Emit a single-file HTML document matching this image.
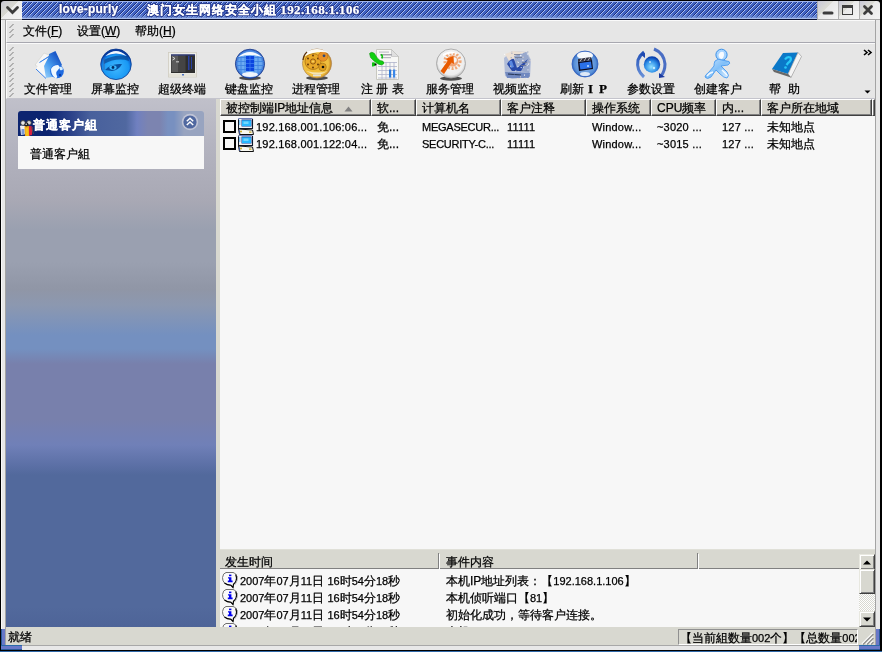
<!DOCTYPE html>
<html><head><meta charset="utf-8">
<style>
*{margin:0;padding:0;box-sizing:border-box}
html,body{width:882px;height:652px;overflow:hidden;background:#000}
body{position:relative;will-change:transform;-webkit-text-stroke:.25px currentColor;font-family:"Liberation Sans",sans-serif;font-size:12px;color:#000}
.a{position:absolute}
.ser{font-family:"Liberation Serif",serif;font-weight:bold}
#frame{left:1px;top:19px;width:879px;height:631px;background:#e8e8e8;border-left:1px solid #f8f8f8;border-top:1px solid #f8f8f8}
#title{left:22px;top:1px;width:795px;height:19px;border-bottom:1px solid #0a1030;background:#4062c0}
.tt{color:#fff;font-weight:bold;font-size:12px;top:1px;white-space:nowrap;text-shadow:1px 0 0 #2a3c90,-1px 0 0 #2a3c90,0 1px 0 #2a3c90,0 -1px 0 #2a3c90,1px 1px 0 #2a3c90,-1px -1px 0 #2a3c90,1px -1px 0 #2a3c90,-1px 1px 0 #2a3c90}
#mbtn{left:1px;top:1px;width:21px;height:19px;background:linear-gradient(135deg,#c8c8d4 0,#d8d8d0 45%,#ececec 46%,#f4f4f4);border-bottom:1px solid #a8a8a8;border-radius:3px 0 0 0}
.wb{top:1px;width:21px;height:19px;background:linear-gradient(135deg,#c8c8d8 0,#dcdcd4 40%,#e8e8e8 41%,#f4f4f4);border-bottom:1px solid #a8a8a8;border-left:1px solid #b0b0b0}
#client{left:5px;top:19px;width:871px;height:627px;border-left:1px solid #a4a4a4;border-right:1px solid #a4a4a4;border-top:1px solid #a8a8a8;border-bottom:1px solid #a8a8a8;background:#e6e6e6}
#menubar{left:6px;top:20px;width:869px;height:23px;background:#e6e6e6;border-top:1px solid #fafafa;border-left:1px solid #fafafa;border-bottom:1px solid #a8a8b0}
#toolbar{left:6px;top:43px;width:869px;height:56px;background:#e6e6e6;border-top:1px solid #fafafa;border-left:1px solid #fafafa;border-bottom:1px solid #c4c4cc}
.grip{left:3px;width:5px;background:repeating-linear-gradient(135deg,transparent 0 3px,#909090 3px 4px,transparent 4px 5px)}
.mi{top:2px;white-space:nowrap}
.tb{top:81px;width:67px;text-align:center;font-size:12px;white-space:nowrap}
#left{left:6px;top:99px;width:210px;height:528px;
 background:linear-gradient(#c0c0ca 0px,#b4b4c0 45px,#a8a8b4 103px,#9aa0b0 131px,#9aa0b0 163px,#9096a6 190px,#8c98b0 206px,#7490c0 236px,#7490c0 250px,#7880ac 265px,#7880ac 320px,#7080b8 346px,#5c70a6 366px,#52699c 376px,#52699c 508px,#4e6498 528px)}
#grp{left:12px;top:12px;width:186px;height:25px;border-radius:3px 3px 0 0;
 background:linear-gradient(90deg,#0c2470 0,#0c2470 30px,#2a4088 52px,#48609c 72px,#5068a0 108px,#7080c0 119px,#7c84b0 130px,#7c84b0 142px,#7890c0 150px,#7890c0 156px,#98a4c0 166px,#98a4c0 186px)}
#grpbody{left:12px;top:37px;width:186px;height:33px;background:#f7f7f7}
#split{left:216px;top:99px;width:4px;height:528px;background:#d8d8d0}
#list{left:220px;top:99px;width:655px;height:450px;background:#f7f7f7;overflow:hidden}
.hd{top:0;height:17px;background:#d6d4cc;border-top:1px solid #fff;border-left:1px solid #fff;border-right:1px solid #404040;border-bottom:1px solid #404040;box-shadow:inset -1px -1px 0 #808080}
.ht{position:absolute;left:5px;top:0px;white-space:nowrap}
.cb{width:13px;height:13px;border:2px solid #000;background:#f7f7f7}
.rt{white-space:nowrap;font-size:11px;letter-spacing:.2px}
.rc{white-space:nowrap;font-size:12px}
#ev{left:220px;top:549px;width:655px;height:78px;background:#f7f7f7;overflow:hidden}
#evh{left:0;top:0;width:655px;height:20px;background:#d8d8d0;border-top:1px solid #e0e0d8;border-bottom:1px solid #808080}
.et{white-space:nowrap;font-size:12px}
.dg{font-size:11px}
.sbb{width:16px;background:#d8d8d0;border-top:1px solid #e8e8e0;border-left:1px solid #e8e8e0;border-right:1px solid #404040;border-bottom:1px solid #404040;box-shadow:inset 1px 1px 0 #fff,inset -1px -1px 0 #808080}
#status{left:6px;top:627px;width:869px;height:18px;background:#d8d8d0}
</style></head><body>
<div id="frame" class="a"></div>
<div id="client" class="a"></div>
<div id="mbtn" class="a"><svg width="21" height="19" style="position:absolute;left:0;top:0"><path d="M6.5 6.5 L11.5 11.5 L16.5 6.5" stroke="#3c3c3c" stroke-width="2.8" fill="none" stroke-linecap="round"/></svg></div>
<div id="title" class="a">
 <svg class="a" style="left:0;top:0" width="795" height="18" shape-rendering="crispEdges">
  <defs>
   <pattern id="stripe" patternUnits="userSpaceOnUse" width="5" height="5" x="4" y="2">
    <rect x="4" y="0" width="1" height="1" fill="#1c2c78"/><rect x="3" y="1" width="1" height="1" fill="#1c2c78"/><rect x="2" y="2" width="1" height="1" fill="#1c2c78"/><rect x="1" y="3" width="1" height="1" fill="#1c2c78"/><rect x="0" y="4" width="1" height="1" fill="#1c2c78"/>
    <rect x="0" y="0" width="1" height="1" fill="#a8c0f4"/><rect x="4" y="1" width="1" height="1" fill="#a8c0f4"/><rect x="3" y="2" width="1" height="1" fill="#a8c0f4"/><rect x="2" y="3" width="1" height="1" fill="#a8c0f4"/><rect x="1" y="4" width="1" height="1" fill="#a8c0f4"/>
   </pattern>
   <linearGradient id="tgrad" x1="0" y1="0" x2="0" y2="1"><stop offset="0" stop-color="#3e60bf"/><stop offset=".72" stop-color="#4262c2"/><stop offset=".85" stop-color="#6080d0"/><stop offset="1" stop-color="#90a8e4"/></linearGradient>
   <linearGradient id="sfade" x1="0" y1="0" x2="0" y2="1"><stop offset="0" stop-color="#fff"/><stop offset=".75" stop-color="#fff"/><stop offset=".9" stop-color="#555"/><stop offset="1" stop-color="#222"/></linearGradient>
   <mask id="smask"><rect width="795" height="18" fill="url(#sfade)"/></mask>
  </defs>
  <rect width="795" height="18" fill="url(#tgrad)"/>
  <rect y="1" width="795" height="16" fill="url(#stripe)" mask="url(#smask)"/>
  <rect width="795" height="1" fill="#a0b4ec"/>
  <rect y="17" width="795" height="1" fill="#a8bcec"/>
 </svg>
 <div class="a tt" style="left:37px;letter-spacing:.2px">love-purly</div>
 <div class="a tt" style="left:125px"><span style="letter-spacing:1px">澳门女生网络安全小組</span> <span style="font-family:'Liberation Serif',serif;font-size:13px;letter-spacing:.35px">192.168.1.106</span></div>
</div>
<div class="a wb" style="left:817px"><svg width="21" height="19" style="position:absolute;left:0;top:0"><path d="M6 12 H14" stroke="#3c3c3c" stroke-width="3" stroke-linecap="round"/></svg></div>
<div class="a wb" style="left:838px"><svg width="21" height="19" style="position:absolute;left:0;top:0"><rect x="3.5" y="4.5" width="10" height="9" fill="none" stroke="#3c3c3c" stroke-width="1"/><rect x="3.5" y="4.5" width="10" height="2.5" fill="#3c3c3c"/></svg></div>
<div class="a wb" style="left:859px;border-radius:0 3px 0 0"><svg width="21" height="19" style="position:absolute;left:0;top:0"><path d="M4.5 5.5 L11.5 12.5 M11.5 5.5 L4.5 12.5" stroke="#3c3c3c" stroke-width="2.8" stroke-linecap="round"/></svg></div>

<div id="menubar" class="a">
 <svg class="a" style="left:2px;top:0" width="8" height="23"><path d="M4.5 3.0 L0.5 7.0 M4.5 8.0 L0.5 12.0 M4.5 13.0 L0.5 17.0" stroke="#7c7c7c" stroke-width="1" fill="none"/></svg>
 <div class="a mi" style="left:16px">文件(<u>F</u>)</div>
 <div class="a mi" style="left:70px">设置(<u>W</u>)</div>
 <div class="a mi" style="left:128px">帮助(<u>H</u>)</div>
</div>
<div id="toolbar" class="a">
 <svg class="a" style="left:2px;top:0" width="8" height="56"><path d="M4.5 3.0 L0.5 7.0 M4.5 8.0 L0.5 12.0 M4.5 13.0 L0.5 17.0 M4.5 19.0 L0.5 23.0 M4.5 24.0 L0.5 28.0 M4.5 29.0 L0.5 33.0 M4.5 34.0 L0.5 38.0 M4.5 39.0 L0.5 43.0 M4.5 44.0 L0.5 48.0 M4.5 49.0 L0.5 53.0" stroke="#7c7c7c" stroke-width="1" fill="none"/></svg>
 <svg class="a" style="left:856px;top:5px" width="10" height="8"><path d="M1 1 L4 3.5 L1 6 M5 1 L8 3.5 L5 6" stroke="#000" stroke-width="1.6" fill="none"/></svg>
 <svg class="a" style="left:857px;top:46px" width="8" height="5"><path d="M0.5 0.5 H6.5 L3.5 3.5Z" fill="#000"/></svg>
</div>
<svg class="a" style="left:0;top:0" width="882" height="100" viewBox="0 0 882 100">
<defs>
 <radialGradient id="gBlue" cx="50%" cy="62%" r="55%"><stop offset="0" stop-color="#40b8ff"/><stop offset=".75" stop-color="#1898f4"/><stop offset=".95" stop-color="#0a60d0"/><stop offset="1" stop-color="#08389a"/></radialGradient>
 <radialGradient id="gKb" cx="50%" cy="50%" r="52%"><stop offset="0" stop-color="#70b0f8"/><stop offset=".75" stop-color="#68a8f0"/><stop offset=".92" stop-color="#3a70d0"/><stop offset="1" stop-color="#1a3a90"/></radialGradient>
 <radialGradient id="gGold" cx="45%" cy="50%" r="55%"><stop offset="0" stop-color="#f0b830"/><stop offset=".8" stop-color="#f0c040"/><stop offset="1" stop-color="#c08020"/></radialGradient>
 <radialGradient id="gWhite" cx="50%" cy="45%" r="55%"><stop offset="0" stop-color="#fafafa"/><stop offset=".8" stop-color="#eeeeee"/><stop offset="1" stop-color="#b8b8b8"/></radialGradient>
 <radialGradient id="gRef" cx="50%" cy="50%" r="55%"><stop offset="0" stop-color="#a8c8f0"/><stop offset=".75" stop-color="#5890d8"/><stop offset="1" stop-color="#2050b0"/></radialGradient>
 <radialGradient id="gGlobe" cx="45%" cy="65%" r="60%"><stop offset="0" stop-color="#90e0ff"/><stop offset=".6" stop-color="#3090e8"/><stop offset="1" stop-color="#0840b0"/></radialGradient>
 <linearGradient id="gHi" x1="0" y1="0" x2="0" y2="1"><stop offset="0" stop-color="#fff" stop-opacity=".95"/><stop offset="1" stop-color="#fff" stop-opacity="0"/></linearGradient>
 <linearGradient id="gFold" x1="0" y1="1" x2="1" y2="0"><stop offset="0" stop-color="#b8e4ff"/><stop offset=".45" stop-color="#4a9ef0"/><stop offset=".8" stop-color="#1a58c8"/><stop offset="1" stop-color="#3070d8"/></linearGradient>
 <linearGradient id="gMan" x1="0" y1="0" x2="1" y2="1"><stop offset="0" stop-color="#c8e4ff"/><stop offset=".5" stop-color="#80bff8"/><stop offset="1" stop-color="#e8f4ff"/></linearGradient>
 <linearGradient id="gArr" x1="0" y1="0" x2="0" y2="1"><stop offset="0" stop-color="#2050b8"/><stop offset="1" stop-color="#6890d8"/></linearGradient>
</defs>
<!-- 1 file manager -->
<g>
 <path d="M35 65 L44 53 L49 55 L41 69Z" fill="#f6f6f6" stroke="#d4d4d0" stroke-width=".7"/>
 <path d="M39.5 62 L49 56 L49 54 L55.5 51 L62 65 L52 77 L45 78Z" fill="url(#gFold)"/>
 <path d="M36 69 L39.5 62.5 L48.5 57 L44 66 L46 78.5 Z" fill="#f8f8f8"/>
 <path d="M36 69 L46 78.5 M39.5 62.5 L49 56.5" stroke="#3a80e8" stroke-width="1" fill="none"/>
 <circle cx="57" cy="71.4" r="6.8" fill="#1e6ae0"/>
 <path d="M51 69 Q53 65 58 65 Q61 67 58 70 Q55 72 57 76 Q58 78 55 78 Q51 75 51 69Z" fill="#f0f8ff"/>
 <path d="M59 67 Q62 66 63 69 Q62 71 60 70Z" fill="#d8f0ff"/>
 <circle cx="60" cy="75" r="1.2" fill="#0a3aa0"/>
</g>
<!-- 2 eye sphere -->
<g>
 <circle cx="116" cy="64.3" r="15.3" fill="url(#gBlue)" stroke="#0a3a90" stroke-width=".8"/>
 <path d="M104 60 Q114 54 128 56 L129 61 Q117 57 104 64Z" fill="#0a4a98" opacity=".75"/>
 <path d="M105 70 Q111 63 122 64 Q119 70 112 71Z" fill="#0850a0"/>
 <ellipse cx="113" cy="67.5" rx="3.6" ry="2.3" fill="#38b8ff"/>
 <circle cx="113" cy="67.5" r="1.4" fill="#052a60"/>
 <path d="M105.5 56 Q116 46 126.5 56 Q116 51 105.5 56Z" fill="#fff" opacity=".95"/>
 <path d="M104 58 L104 70" stroke="#4060a0" stroke-width=".8"/>
</g>
<!-- 3 terminal -->
<g>
 <rect x="168.5" y="52.5" width="28" height="24.5" fill="#eeeeea" stroke="#d0cdc0" stroke-width=".8"/>
 <rect x="171" y="54.5" width="24" height="18.5" fill="#2e2e2e"/>
 <rect x="171.5" y="55" width="7" height="17" fill="#5a5a5a"/>
 <rect x="178.5" y="55" width="7" height="17" fill="#444"/>
 <rect x="171" y="54.5" width="24" height="1" fill="#2a3a90"/>
 <rect x="188" y="56" width="1.5" height="14" fill="#2840a0"/>
 <rect x="191" y="57" width="1" height="12" fill="#2840a0"/>
 <path d="M172.5 57 L175 58.5 L172.5 60" stroke="#e0e0e0" stroke-width=".9" fill="none"/>
 <rect x="176" y="61" width="3" height="1.5" fill="#aaa"/>
 <rect x="169" y="73.5" width="27" height="3" fill="#e4e2d8"/>
 <rect x="182" y="74" width="2" height="1.5" fill="#4a70c0"/>
</g>
<!-- 4 keyboard sphere -->
<g>
 <ellipse cx="250" cy="78" rx="11" ry="2.2" fill="#303030" opacity=".85"/>
 <circle cx="250" cy="63.8" r="14.6" fill="url(#gKb)" stroke="#1a3a8a" stroke-width=".8"/>
 <g stroke="#3a80e0" stroke-width=".9" opacity=".9">
  <path d="M237 57.5 H263 M236 61.5 H264 M236 65.5 H264 M237 69.5 H263 M241 53 V75 M245 52 V76 M254 52 V76 M258 53 V75"/>
 </g>
 <rect x="246" y="56" width="8" height="15" fill="#0a44e0"/>
 <g stroke="#3a7af0" stroke-width=".8"><path d="M246 59.5 H254 M246 63.5 H254 M246 67.5 H254 M250 56 V71"/></g>
 <path d="M238 57 Q250 47 262 57 Q250 53 238 57Z" fill="#fff" opacity=".95"/>
 <ellipse cx="250" cy="74.5" rx="8" ry="2.4" fill="#fff" opacity=".9"/>
</g>
<!-- 5 gears sphere -->
<g>
 <ellipse cx="317" cy="78" rx="11" ry="2.2" fill="#303030" opacity=".85"/>
 <circle cx="317" cy="63.5" r="14.6" fill="url(#gGold)" stroke="#a88050" stroke-width=".6"/>
 <circle cx="313" cy="61.5" r="8" fill="#e8a828" stroke="#a06810" stroke-width=".7"/>
 <g fill="#5a3008"><circle cx="313" cy="55.5" r=".9"/><circle cx="318" cy="58.5" r=".9"/><circle cx="318" cy="64.5" r=".9"/><circle cx="313" cy="67.5" r=".9"/><circle cx="308" cy="64.5" r=".9"/><circle cx="308" cy="58.5" r=".9"/></g>
 <circle cx="313" cy="61.5" r="2.6" fill="none" stroke="#8a5010" stroke-width=".9"/>
 <circle cx="313" cy="61.5" r="1" fill="#f8d060"/>
 <circle cx="323" cy="56.5" r="4.8" fill="#e89028" stroke="#b06010" stroke-width=".5"/>
 <circle cx="324" cy="55.8" r="1.4" fill="#304878"/>
 <circle cx="322.5" cy="67" r="3.8" fill="#e0a020" stroke="#906010" stroke-width=".5"/>
 <circle cx="323" cy="67" r="1.3" fill="#101010"/>
 <path d="M305 53 Q317 45 329 53 Q317 50 305 56Z" fill="#fff" opacity=".95"/>
 <path d="M306 71 Q317 78 328 71 Q320 74 306 71Z" fill="#f4e8c0" opacity=".9"/>
 <rect x="313" y="74.5" width="8" height="1.8" fill="#e0e0e0"/>
 <path d="M303 60 Q303.5 55 307 52" stroke="#5a3008" stroke-width="1.3" fill="none"/>
</g>
<!-- 6 registry -->
<g>
 <path d="M376.5 49.5 L391.5 49.5 L398.5 56.5 L398.5 79.5 L376.5 79.5 Z" fill="#f8f8f6" stroke="#c8c8c0" stroke-width="1"/>
 <path d="M391.5 49.5 L391.5 56.5 L398.5 56.5Z" fill="#e0e0e0" stroke="#b8b8b8" stroke-width=".6"/>
 <rect x="379" y="51.5" width="10" height="1.2" fill="#c0c0c8"/>
 <rect x="380" y="54" width="12" height="1.5" fill="#a8a8b0"/>
 <rect x="381" y="57" width="10" height="1.2" fill="#b8b8c0"/>
 <g stroke="#b0b4cc" stroke-width=".8"><path d="M378 62.5 H397 M378 66.5 H397 M378 70.5 H397 M378 74.5 H397 M378 78 H397 M382 62 V79 M386 62 V79 M390 62 V79 M394 62 V79"/></g>
 <rect x="389" y="69.5" width="2.2" height="8" fill="#2a78d8"/>
 <rect x="393" y="69.5" width="2.2" height="8" fill="#3a88e8"/>
 <path d="M369.5 53.5 Q371.5 51 374.5 53.5 Q377 58.5 380 60.5 Q384 60.5 384 63.5 Q382 66 378 64 Q373 60.5 370.5 57.5 Z" fill="#10d010" stroke="#108a10" stroke-width=".5"/>
 <path d="M372 62.5 Q375 61.5 376 64.5 Q375 67 372 66.5Z" fill="#10c010"/>
 <circle cx="375.5" cy="64.5" r="1" fill="#000"/>
 <path d="M381 54.5 Q383 55.5 382 58.5" stroke="#10c010" stroke-width="1.6" fill="none"/>
</g>
<!-- 7 service sphere -->
<g>
 <ellipse cx="451" cy="78.5" rx="11" ry="2.2" fill="#303030" opacity=".85"/>
 <circle cx="451" cy="63.5" r="14.5" fill="url(#gWhite)" stroke="#a0a0a0" stroke-width=".8"/>
 <circle cx="452.5" cy="61" r="7.6" fill="none" stroke="#f0a878" stroke-width="3" stroke-dasharray="2 1.6"/>
 <circle cx="452.5" cy="61" r="5.8" fill="#f0a070" opacity=".95"/>
 <circle cx="454" cy="60" r="2.8" fill="#f4f4f4"/>
 <path d="M440.5 71 L448 60.5 L445.5 59 L453.5 56 L454 64 L451.5 62.5 L444 74Z" fill="#e85a00"/>
 <path d="M443 54 Q451 49 459 54 Q451 52 443 56Z" fill="#fff"/>
</g>
<!-- 8 video -->
<g>
 <path d="M504 58 L512 51 L527 52 L531 60 L530 77 L512 79 L505 76Z" fill="#b0bcd8"/>
 <path d="M505 54 L513 51 L526 52 L521 59 L509 61Z" fill="#ece0d4"/>
 <path d="M514 56 L526 52 L530 60 L529 73 L517 70Z" fill="#98a8cc"/>
 <path d="M507 64 Q511 58 514 59 L517 68 L528 59 L521 71 L512 71Z" fill="#2a4aa8"/>
 <path d="M509 62 Q511 60 512 61 L514 67 L511 68Z" fill="#5a88e0"/>
 <path d="M505 72 L530 73 L529 78 L507 78Z" fill="#7088c0"/>
 <path d="M508 74 L521 75" stroke="#203050" stroke-width="1.2"/>
 <g fill="#707890" opacity=".8"><rect x="514" y="54" width="6" height="1"/><rect x="515" y="57" width="7" height="1"/><rect x="522" y="62" width="5" height="1"/><rect x="521" y="65" width="6" height="1"/></g>
 <rect x="510.2" y="65.7" width="1" height="1" fill="#f0e0d0"/><rect x="527.8" y="63.8" width="1" height="1" fill="#ffffff"/><rect x="519.7" y="75.5" width="1" height="1" fill="#8090b8"/><rect x="510.7" y="57.3" width="1" height="1" fill="#8090b8"/><rect x="518.1" y="65.8" width="1" height="1" fill="#8090b8"/><rect x="520.6" y="55.1" width="1" height="1" fill="#e8eef8"/><rect x="526.6" y="65.1" width="1" height="1" fill="#ffffff"/><rect x="521.5" y="52.7" width="1" height="1" fill="#ffffff"/><rect x="511.8" y="51.8" width="1" height="1" fill="#f0e0d0"/><rect x="516.3" y="70.4" width="1" height="1" fill="#8090b8"/><rect x="522.6" y="75.9" width="1" height="1" fill="#8090b8"/><rect x="522.9" y="66.6" width="1" height="1" fill="#e8eef8"/><rect x="526.9" y="53.6" width="1" height="1" fill="#e8eef8"/><rect x="516.9" y="58.0" width="1" height="1" fill="#8090b8"/><rect x="524.3" y="74.1" width="1" height="1" fill="#8090b8"/><rect x="517.2" y="61.4" width="1" height="1" fill="#f0e0d0"/><rect x="517.9" y="62.0" width="1" height="1" fill="#e8eef8"/><rect x="527.5" y="69.4" width="1" height="1" fill="#ffffff"/><rect x="526.3" y="77.8" width="1" height="1" fill="#e8eef8"/><rect x="522.2" y="59.8" width="1" height="1" fill="#ffffff"/><rect x="522.6" y="56.7" width="1" height="1" fill="#f0e0d0"/><rect x="511.4" y="52.7" width="1" height="1" fill="#8090b8"/><rect x="506.3" y="72.6" width="1" height="1" fill="#8090b8"/><rect x="527.3" y="51.5" width="1" height="1" fill="#8090b8"/><rect x="524.0" y="74.6" width="1" height="1" fill="#ffffff"/><rect x="519.7" y="71.6" width="1" height="1" fill="#8090b8"/><rect x="522.7" y="59.9" width="1" height="1" fill="#f0e0d0"/><rect x="517.1" y="78.0" width="1" height="1" fill="#f0e0d0"/><rect x="504.2" y="53.9" width="1" height="1" fill="#ffffff"/><rect x="528.7" y="77.2" width="1" height="1" fill="#f0e0d0"/><rect x="519.9" y="55.2" width="1" height="1" fill="#ffffff"/><rect x="529.5" y="60.2" width="1" height="1" fill="#f0e0d0"/><rect x="528.9" y="75.2" width="1" height="1" fill="#8090b8"/><rect x="513.8" y="74.5" width="1" height="1" fill="#8090b8"/><rect x="520.7" y="67.1" width="1" height="1" fill="#ffffff"/><rect x="520.1" y="76.4" width="1" height="1" fill="#f0e0d0"/><rect x="515.2" y="70.4" width="1" height="1" fill="#e8eef8"/><rect x="528.3" y="62.8" width="1" height="1" fill="#f0e0d0"/><rect x="517.5" y="65.8" width="1" height="1" fill="#ffffff"/><rect x="524.5" y="77.7" width="1" height="1" fill="#f0e0d0"/>
</g>
<!-- 9 refresh IP -->
<g>
 <circle cx="585" cy="64" r="13" fill="url(#gRef)" stroke="#3060c0" stroke-width=".8"/>
 <ellipse cx="585" cy="55.5" rx="8" ry="3.8" fill="#fff" opacity=".95"/>
 <ellipse cx="585" cy="74" rx="5" ry="2" fill="#fff" opacity=".8"/>
 <path d="M578 62 L592 60 L593 69 L579 71Z" fill="#0a0a20"/>
 <path d="M579.5 63 L591 61.5 L591.8 68 L580.3 69.5Z" fill="#2a70e8"/>
 <path d="M578 59 L591 57 L592 60 L578 62Z" fill="#303040"/>
 <g stroke="#e0e0e0" stroke-width=".8"><path d="M580 61.5 L582 58.3 M584 61 L586 57.8 M588 60.5 L590 57.3"/></g>
 <circle cx="588" cy="66" r="1" fill="#c0e0ff"/>
</g>
<!-- 10 params -->
<g>
 <circle cx="652" cy="64.5" r="8.2" fill="url(#gGlobe)"/>
 <path d="M644 77 Q636 70 638 60 Q640 55 644 52" stroke="url(#gArr)" stroke-width="3" fill="none"/>
 <path d="M640 54 L645 53 L645 58Z" fill="#2048b0"/>
 <path d="M654 49 Q664 53 665 64 Q665 71 661 76" stroke="#3860c0" stroke-width="3" fill="none" opacity=".9"/>
 <path d="M659 73 L665 77 L659 78Z" fill="#1a3aa0"/>
 <circle cx="650" cy="62" r="1" fill="#fff" opacity=".7"/><circle cx="654" cy="68" r="1.2" fill="#e0f8ff" opacity=".8"/>
</g>
<!-- 11 AIM man -->
<g>
 <circle cx="721.5" cy="54.8" r="5.6" fill="#a8d4ff" stroke="#3a90e8" stroke-width="1"/>
 <path d="M718.5 55 Q720 50.5 723.5 52 Q725 56 722 59 Q719 59 718.5 55Z" fill="#f8fbff"/>
 <path d="M715 61 Q718 58 722 60 L729 61.5 Q731 63 728 65 L721 66 L727 72 Q730 76 727 78 Q724 78 720 74 L716 70 L711 77 Q707 80 705 77 Q705 75 709 72 L714 66 Q714 63 715 61Z" fill="url(#gMan)" stroke="#4a9aee" stroke-width=".9"/>
 <path d="M707 76 Q709 73 713 72 M722 70 L727 75" stroke="#fff" stroke-width="1.4" fill="none" opacity=".9"/>
</g>
<!-- 12 help book -->
<g>
 <path d="M783 53 L798 52.5 L788 74 L772 69Z" fill="#0a78c8"/>
 <path d="M798 52.5 L801.5 56.5 L791 77.5 L788 74Z" fill="#f4f4f4" stroke="#909090" stroke-width=".6"/>
 <path d="M772 69 L788 74 L791 77.5 L774 72Z" fill="#686868"/>
 <path d="M785 59.5 Q787 56 790.5 57.5 Q792 60 788 63 L786.5 65" stroke="#28c8f8" stroke-width="2.2" fill="none"/>
 <circle cx="785.5" cy="67.5" r="1.3" fill="#28c8f8"/>
</g>
</svg>

<div class="a tb" style="left:14px">文件管理</div>
<div class="a tb" style="left:81px">屏幕监控</div>
<div class="a tb" style="left:148px">超级终端</div>
<div class="a tb" style="left:215px">键盘监控</div>
<div class="a tb" style="left:282px">进程管理</div>
<div class="a tb" style="left:349px">注 册 表</div>
<div class="a tb" style="left:416px">服务管理</div>
<div class="a tb" style="left:483px">视频监控</div>
<div class="a tb" style="left:550px">刷新<b class='ser' style='font-size:13px;margin-left:4px'>I</b><b class='ser' style='font-size:13px;margin-left:6px'>P</b></div>
<div class="a tb" style="left:617px">参数设置</div>
<div class="a tb" style="left:684px">创建客户</div>
<div class="a tb" style="left:751px">帮<span style='display:inline-block;width:7px'></span>助</div>
<div id="left" class="a">
 <div id="grp" class="a">
  <svg class="a" style="left:1px;top:9px" width="15" height="16" viewBox="0 0 15 16"><path d="M1 6 Q3 4.5 6 6 L6.5 14 L2 15 Z" fill="#f0f0f0"/><path d="M2.5 9 L5.5 9 L5.5 14.5 L2.5 14.5Z" fill="#7a98d8"/><circle cx="4" cy="3" r="2.4" fill="#e8e8e8" stroke="#303030" stroke-width=".9"/><circle cx="10" cy="2.8" r="2.3" fill="#d8d8d8" stroke="#404040" stroke-width=".9"/><path d="M5.5 6.5 Q8 5 10.5 6.5 L10.5 16 L6 16 Z" fill="#f0a818"/><path d="M6.5 8 L9 8 L9.5 15.5 L7 15.5Z" fill="#f8c820" opacity=".8"/><path d="M10 6 Q12 5.5 13.5 7 L13 15 L10 15.5Z" fill="#d82040"/><circle cx="7.5" cy="4.5" r="2" fill="#202020"/><circle cx="7.2" cy="4.2" r=".8" fill="#e0e0e0"/><path d="M12.5 7 L14.5 14" stroke="#505050" stroke-width=".9"/></svg>
  <div class="a" style="left:15px;top:6px;color:#fff;font-weight:bold;white-space:nowrap;letter-spacing:1px">普通客户組</div>
  <svg class="a" style="left:163px;top:2px" width="18" height="18" viewBox="0 0 18 18"><circle cx="9" cy="9" r="8.2" fill="#c4c8d8" opacity=".9"/><circle cx="9" cy="9" r="6.6" fill="#5068a0"/><path d="M5.8 8.2 L9 5.2 L12.2 8.2 M5.8 12 L9 9 L12.2 12" stroke="#fff" stroke-width="1.5" fill="none"/></svg>
 </div>
 <div id="grpbody" class="a"><div class="a" style="left:12px;top:10px;white-space:nowrap">普通客户組</div></div>
</div>
<div id="split" class="a"></div>
<div id="list" class="a">
<div class="a hd" style="left:0px;width:151px"><span class="ht">被控制端IP地址信息<svg style='position:absolute;left:118px;top:6px' width='10' height='6'><path d='M0.5 5.5 L4.5 0.5 L8.5 5.5Z' fill='#808080'/></svg></span></div>
<div class="a hd" style="left:151px;width:45px"><span class="ht">软...</span></div>
<div class="a hd" style="left:196px;width:85px"><span class="ht">计算机名</span></div>
<div class="a hd" style="left:281px;width:85px"><span class="ht">客户注释</span></div>
<div class="a hd" style="left:366px;width:65px"><span class="ht">操作系统</span></div>
<div class="a hd" style="left:431px;width:65px"><span class="ht">CPU频率</span></div>
<div class="a hd" style="left:496px;width:45px"><span class="ht">内...</span></div>
<div class="a hd" style="left:541px;width:111px"><span class="ht">客户所在地域</span></div>
<div class="a hd" style="left:652px;width:3px"><span class="ht"></span></div>
<div class="a cb" style="left:3px;top:21px"></div>
<svg class="a" style="left:18px;top:19px" width="16" height="17" viewBox="0 0 16 17"><rect x="0.5" y="0.5" width="14" height="10" fill="#f4f4f4"/><path d="M0.5 10.5 V0.5 H14.5" stroke="#7080b8" stroke-width="1" fill="none"/><path d="M0.5 1.5 V10.5 H14.5 V1" stroke="#101828" stroke-width="1.1" fill="none"/><rect x="3.5" y="1.5" width="10" height="7" fill="#1a3a90"/><rect x="4" y="2.3" width="9" height="5.8" fill="#28b8ff"/><rect x="5.5" y="3.5" width="5" height="2.5" fill="#70d8ff"/><rect x="1.2" y="2" width="1.2" height="5" fill="#68b8f0"/><path d="M0.5 11 L14.5 12 L15.5 16.5 L1.5 16.5 Z" fill="#f8f8f0" stroke="#101010" stroke-width="1"/><circle cx="3" cy="13.5" r="1" fill="#c8a820"/><rect x="11" y="13.5" width="2.5" height="1.2" fill="#c0a020"/><path d="M1 12 L2 16" stroke="#3858a8" stroke-width="1"/></svg>
<div class="a rt" style="left:36px;top:22px">192.168.001.106:06...</div>
<div class="a rc" style="left:157px;top:20px">免...</div>
<div class="a rt" style="left:202px;top:22px;letter-spacing:-.25px">MEGASECUR...</div>
<div class="a rt" style="left:287px;top:22px">11111</div>
<div class="a rt" style="left:372px;top:22px">Window...</div>
<div class="a rt" style="left:437px;top:22px">~3020 ...</div>
<div class="a rt" style="left:502px;top:22px">127 ...</div>
<div class="a rc" style="left:547px;top:20px">未知地点</div>
<div class="a cb" style="left:3px;top:38px"></div>
<svg class="a" style="left:18px;top:36px" width="16" height="17" viewBox="0 0 16 17"><rect x="0.5" y="0.5" width="14" height="10" fill="#f4f4f4"/><path d="M0.5 10.5 V0.5 H14.5" stroke="#7080b8" stroke-width="1" fill="none"/><path d="M0.5 1.5 V10.5 H14.5 V1" stroke="#101828" stroke-width="1.1" fill="none"/><rect x="3.5" y="1.5" width="10" height="7" fill="#1a3a90"/><rect x="4" y="2.3" width="9" height="5.8" fill="#28b8ff"/><rect x="5.5" y="3.5" width="5" height="2.5" fill="#70d8ff"/><rect x="1.2" y="2" width="1.2" height="5" fill="#68b8f0"/><path d="M0.5 11 L14.5 12 L15.5 16.5 L1.5 16.5 Z" fill="#f8f8f0" stroke="#101010" stroke-width="1"/><circle cx="3" cy="13.5" r="1" fill="#c8a820"/><rect x="11" y="13.5" width="2.5" height="1.2" fill="#c0a020"/><path d="M1 12 L2 16" stroke="#3858a8" stroke-width="1"/></svg>
<div class="a rt" style="left:36px;top:39px">192.168.001.122:04...</div>
<div class="a rc" style="left:157px;top:37px">免...</div>
<div class="a rt" style="left:202px;top:39px;letter-spacing:-.25px">SECURITY-C...</div>
<div class="a rt" style="left:287px;top:39px">11111</div>
<div class="a rt" style="left:372px;top:39px">Window...</div>
<div class="a rt" style="left:437px;top:39px">~3015 ...</div>
<div class="a rt" style="left:502px;top:39px">127 ...</div>
<div class="a rc" style="left:547px;top:37px">未知地点</div>
</div>
<div id="ev" class="a">
 <div id="evh" class="a"><div class="a" style="left:5px;top:4px">发生时间</div><div class="a" style="left:218px;top:3px;width:1px;height:16px;background:#808080;box-shadow:1px 1px 0 #fff"></div><div class="a" style="left:226px;top:4px">事件内容</div><div class="a" style="left:477px;top:3px;width:1px;height:16px;background:#808080;box-shadow:1px 1px 0 #fff"></div></div>
<svg class="a" style="left:2px;top:23px" width="16" height="17" viewBox="0 0 16 17"><path d="M4 0.5 H11 Q14.5 1 14.5 6 Q14.5 10 11.5 12 L11 15.5 L9 13.3 Q4 13 2 10.5 Q0.5 8.5 0.5 5.5 Q1 1.2 4 0.5Z" fill="#fafafa" stroke="#707070" stroke-width="1"/><path d="M13.8 2.5 Q15 6 14.3 8.8 Q13 11.5 11.5 12.2 L11 15.5 L9 13.3 Q5 13 2.5 11" stroke="#000" stroke-width="1.1" fill="none"/><path d="M15.5 4 Q16 8 14 11 L12.5 13" stroke="#b0b0b0" stroke-width="1" fill="none"/><rect x="7" y="2.6" width="2.4" height="1.6" fill="#0000f0"/><path d="M6 5.2 H9.4 V8.6 H10.6 V10.3 H5.8 V8.6 H7 V6.6 H6Z" fill="#0000f0"/></svg>
<div class="a et" style="left:20px;top:24px"><span class="dg">2007</span>年<span class="dg">07</span>月<span class="dg">11</span>日 <span class="dg">16</span>时<span class="dg">54</span>分<span class="dg">18</span>秒</div>
<div class="a et" style="left:226px;top:24px">本机IP地址列表：【<span class="dg">192.168.1.106</span>】</div>
<svg class="a" style="left:2px;top:40px" width="16" height="17" viewBox="0 0 16 17"><path d="M4 0.5 H11 Q14.5 1 14.5 6 Q14.5 10 11.5 12 L11 15.5 L9 13.3 Q4 13 2 10.5 Q0.5 8.5 0.5 5.5 Q1 1.2 4 0.5Z" fill="#fafafa" stroke="#707070" stroke-width="1"/><path d="M13.8 2.5 Q15 6 14.3 8.8 Q13 11.5 11.5 12.2 L11 15.5 L9 13.3 Q5 13 2.5 11" stroke="#000" stroke-width="1.1" fill="none"/><path d="M15.5 4 Q16 8 14 11 L12.5 13" stroke="#b0b0b0" stroke-width="1" fill="none"/><rect x="7" y="2.6" width="2.4" height="1.6" fill="#0000f0"/><path d="M6 5.2 H9.4 V8.6 H10.6 V10.3 H5.8 V8.6 H7 V6.6 H6Z" fill="#0000f0"/></svg>
<div class="a et" style="left:20px;top:41px"><span class="dg">2007</span>年<span class="dg">07</span>月<span class="dg">11</span>日 <span class="dg">16</span>时<span class="dg">54</span>分<span class="dg">18</span>秒</div>
<div class="a et" style="left:226px;top:41px">本机侦听端口【<span class="dg">81</span>】</div>
<svg class="a" style="left:2px;top:57px" width="16" height="17" viewBox="0 0 16 17"><path d="M4 0.5 H11 Q14.5 1 14.5 6 Q14.5 10 11.5 12 L11 15.5 L9 13.3 Q4 13 2 10.5 Q0.5 8.5 0.5 5.5 Q1 1.2 4 0.5Z" fill="#fafafa" stroke="#707070" stroke-width="1"/><path d="M13.8 2.5 Q15 6 14.3 8.8 Q13 11.5 11.5 12.2 L11 15.5 L9 13.3 Q5 13 2.5 11" stroke="#000" stroke-width="1.1" fill="none"/><path d="M15.5 4 Q16 8 14 11 L12.5 13" stroke="#b0b0b0" stroke-width="1" fill="none"/><rect x="7" y="2.6" width="2.4" height="1.6" fill="#0000f0"/><path d="M6 5.2 H9.4 V8.6 H10.6 V10.3 H5.8 V8.6 H7 V6.6 H6Z" fill="#0000f0"/></svg>
<div class="a et" style="left:20px;top:58px"><span class="dg">2007</span>年<span class="dg">07</span>月<span class="dg">11</span>日 <span class="dg">16</span>时<span class="dg">54</span>分<span class="dg">18</span>秒</div>
<div class="a et" style="left:226px;top:58px">初始化成功，等待客户连接。</div>
<svg class="a" style="left:2px;top:74px" width="16" height="17" viewBox="0 0 16 17"><path d="M4 0.5 H11 Q14.5 1 14.5 6 Q14.5 10 11.5 12 L11 15.5 L9 13.3 Q4 13 2 10.5 Q0.5 8.5 0.5 5.5 Q1 1.2 4 0.5Z" fill="#fafafa" stroke="#707070" stroke-width="1"/><path d="M13.8 2.5 Q15 6 14.3 8.8 Q13 11.5 11.5 12.2 L11 15.5 L9 13.3 Q5 13 2.5 11" stroke="#000" stroke-width="1.1" fill="none"/><path d="M15.5 4 Q16 8 14 11 L12.5 13" stroke="#b0b0b0" stroke-width="1" fill="none"/><rect x="7" y="2.6" width="2.4" height="1.6" fill="#0000f0"/><path d="M6 5.2 H9.4 V8.6 H10.6 V10.3 H5.8 V8.6 H7 V6.6 H6Z" fill="#0000f0"/></svg>
<div class="a et" style="left:20px;top:75px"><span class="dg">2007</span>年<span class="dg">07</span>月<span class="dg">11</span>日 <span class="dg">16</span>时<span class="dg">54</span>分<span class="dg">18</span>秒</div>
<div class="a et" style="left:226px;top:75px">本机<span class="dg">...</span></div>

 <div class="a" style="left:639px;top:5px;width:16px;height:73px;background:repeating-conic-gradient(#d8d8d0 0 25%,#ffffff 0 50%) 0 0/2px 2px"></div>
 <div class="a sbb" style="left:639px;top:5px;height:16px"><svg class="a" style="left:3px;top:5px" width="9" height="5"><path d="M0 4.5 H8 L4 0.5Z" fill="#000"/></svg></div>
 <div class="a sbb" style="left:639px;top:20px;height:25px"></div>
 <div class="a sbb" style="left:639px;top:62px;height:16px"><svg class="a" style="left:3px;top:5px" width="9" height="5"><path d="M0 0.5 H8 L4 4.5Z" fill="#000"/></svg></div>
</div>
<div id="status" class="a"><div class="a" style="left:2px;top:2px">就绪</div>
 <div class="a" style="left:672px;top:2px;width:180px;height:16px;border-top:1px solid #909090;border-left:1px solid #909090;border-right:1px solid #fff;border-bottom:1px solid #fff;overflow:hidden;white-space:nowrap"><div class="a" style="left:1px;top:0px">【当前組数量<span class="dg">002</span>个】【总数量<span class="dg">002</span>个】</div></div>
 <svg class="a" style="left:854px;top:4px" width="14" height="14"><g stroke-width="1.4"><path d="M2 13 L13 2" stroke="#fff"/><path d="M3 13.5 L13.5 3" stroke="#909090"/><path d="M6 13 L13 6" stroke="#fff"/><path d="M7 13.5 L13.5 7" stroke="#909090"/><path d="M10 13 L13 10" stroke="#fff"/><path d="M11 13.5 L13.5 11" stroke="#909090"/></g></svg>
</div>
<div class="a" style="left:876px;top:629px;width:4px;height:21px;background:#6878c8;border-right:1px solid #2a5a98"></div>
<div class="a" style="left:859px;top:645px;width:21px;height:5px;background:#6878c8;border-top:1px solid #2a6aa8;border-bottom:1px solid #2a5a98"></div>
<div class="a" style="left:1px;top:629px;width:4px;height:21px;background:#6878c8;border-left:1px solid #2a5a98"></div>
<div class="a" style="left:1px;top:645px;width:21px;height:5px;background:#6878c8;border-top:1px solid #2a6aa8;border-bottom:1px solid #2a5a98"></div>
<div class="a" style="left:0;top:651px;width:882px;height:1px;background:#3068a8"></div>
<div class="a" style="left:0;top:650px;width:882px;height:1px;background:#000"></div>
</body></html>
